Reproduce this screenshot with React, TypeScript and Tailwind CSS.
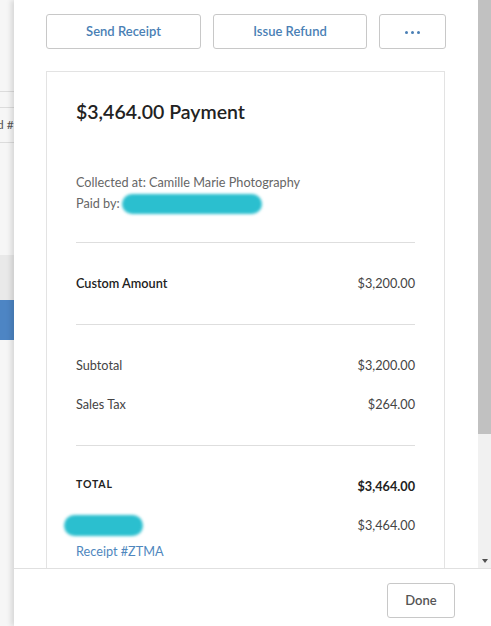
import React from "react";

const Blob = ({ className }: { className: string }) => (
  <div className={`rounded-full bg-[#2bbfcf] blur-[1.5px] ${className}`} />
);

export default function App() {
  return (
    <div
      className="flex h-[626px] w-[491px] overflow-hidden bg-white text-[#333]"
      style={{ fontFamily: "Lato, 'Open Sans', Arial, sans-serif" }}
    >
      {/* background page strip */}
      <div className="flex w-[14px] shrink-0 flex-col bg-[#f6f6f6]">
        <div className="h-[91px]" />
        <div className="h-[17px] border-y border-[#dcdcdc]" />
        <div className="flex h-[35px] items-center overflow-hidden border-b border-[#dcdcdc] whitespace-nowrap text-[12px] text-[#555]">
          <span className="-ml-[3px]">d #</span>
        </div>
        <div className="h-[112px]" />
        <div className="h-[45px] bg-[#e9e9e9]" />
        <div className="h-[40px] bg-[#4d85c4]" />
        <div className="flex-1" />
      </div>

      {/* modal */}
      <div className="relative flex flex-1 flex-col bg-white shadow-[-3px_0_5px_rgba(0,0,0,0.12)]">
        <div className="flex h-[568px] overflow-hidden">
          <div className="flex-1 overflow-hidden pl-[32px] pr-[32px] pt-[14px]">
            <div className="flex gap-[12px]">
              <button className="flex h-[35px] w-[155px] items-center justify-center rounded-[3px] border border-[#c8c8c8] pt-[1px] text-[13px] font-semibold text-[#4a7fb5]">
                Send Receipt
              </button>
              <button className="flex h-[35px] w-[154px] items-center justify-center rounded-[3px] border border-[#c8c8c8] pt-[1px] text-[13px] font-semibold text-[#4a7fb5]">
                Issue Refund
              </button>
              <button className="flex h-[35px] w-[67px] items-center justify-center gap-[3px] rounded-[3px] border border-[#c8c8c8] pt-[1px]">
                <span className="h-[3px] w-[3px] rounded-full bg-[#4a7fb5]" />
                <span className="h-[3px] w-[3px] rounded-full bg-[#4a7fb5]" />
                <span className="h-[3px] w-[3px] rounded-full bg-[#4a7fb5]" />
              </button>
            </div>

            <div className="mt-[22px] h-[600px] w-[399px] border border-[#e3e3e3] px-[29px] pt-[26px]">
              <div className="text-[19.5px] font-semibold leading-[28px] text-[#222]">
                $3,464.00 Payment
              </div>
              <div className="mt-[46px] text-[12.7px] leading-[21px] text-[#666]">
                Collected at: Camille Marie Photography
              </div>
              <div className="flex h-[21px] items-center text-[12.7px] text-[#666]">
                <span>Paid by:</span>
                <Blob className="ml-[2px] h-[20px] w-[140px]" />
              </div>
              <div className="mt-[28px] border-t border-[#dedede]" />
              <div className="flex h-[81px] items-center justify-between text-[12.7px]">
                <span className="font-semibold text-[#222]">Custom Amount</span>
                <span className="text-[#444]">$3,200.00</span>
              </div>
              <div className="border-t border-[#dedede]" />
              <div className="mt-[30px] flex h-[21px] items-center justify-between text-[12.7px] text-[#444]">
                <span>Subtotal</span>
                <span>$3,200.00</span>
              </div>
              <div className="mt-[18px] flex h-[21px] items-center justify-between text-[12.7px] text-[#444]">
                <span>Sales Tax</span>
                <span>$264.00</span>
              </div>
              <div className="mt-[30px] border-t border-[#dedede]" />
              <div className="mt-[29px] flex h-[21px] items-center justify-between text-[#222]">
                <span className="-translate-y-[1px] text-[10.5px] font-bold tracking-[0.08em]">TOTAL</span>
                <span className="translate-y-[1px] text-[12.7px] font-bold">$3,464.00</span>
              </div>
              <div className="mt-[19px] flex h-[21px] items-center justify-between text-[12.7px] text-[#444]">
                <Blob className="-ml-[12px] h-[21px] w-[79px]" />
                <span>$3,464.00</span>
              </div>
              <div className="mt-[5px] text-[12.7px] leading-[21px] text-[#4f87be]">Receipt #ZTMA</div>
            </div>
          </div>
          {/* scrollbar */}
          <div className="flex w-[14px] shrink-0 flex-col bg-[#f1f1f1]">
            <div className="h-[434px] bg-[#c1c1c1]" />
            <div className="flex flex-1 items-end justify-center pb-[5px]">
              <div className="h-0 w-0 border-x-[3px] border-t-[4px] border-x-transparent border-t-[#505050]" />
            </div>
          </div>
        </div>
        <div className="flex flex-1 items-start justify-end border-t border-[#e0e0e0] pr-[37px] pt-[14px]">
          <button className="flex h-[35px] w-[68px] items-center justify-center rounded-[3px] border border-[#c8c8c8] text-[13px] font-semibold text-[#555]">
            Done
          </button>
        </div>
      </div>
    </div>
  );
}
